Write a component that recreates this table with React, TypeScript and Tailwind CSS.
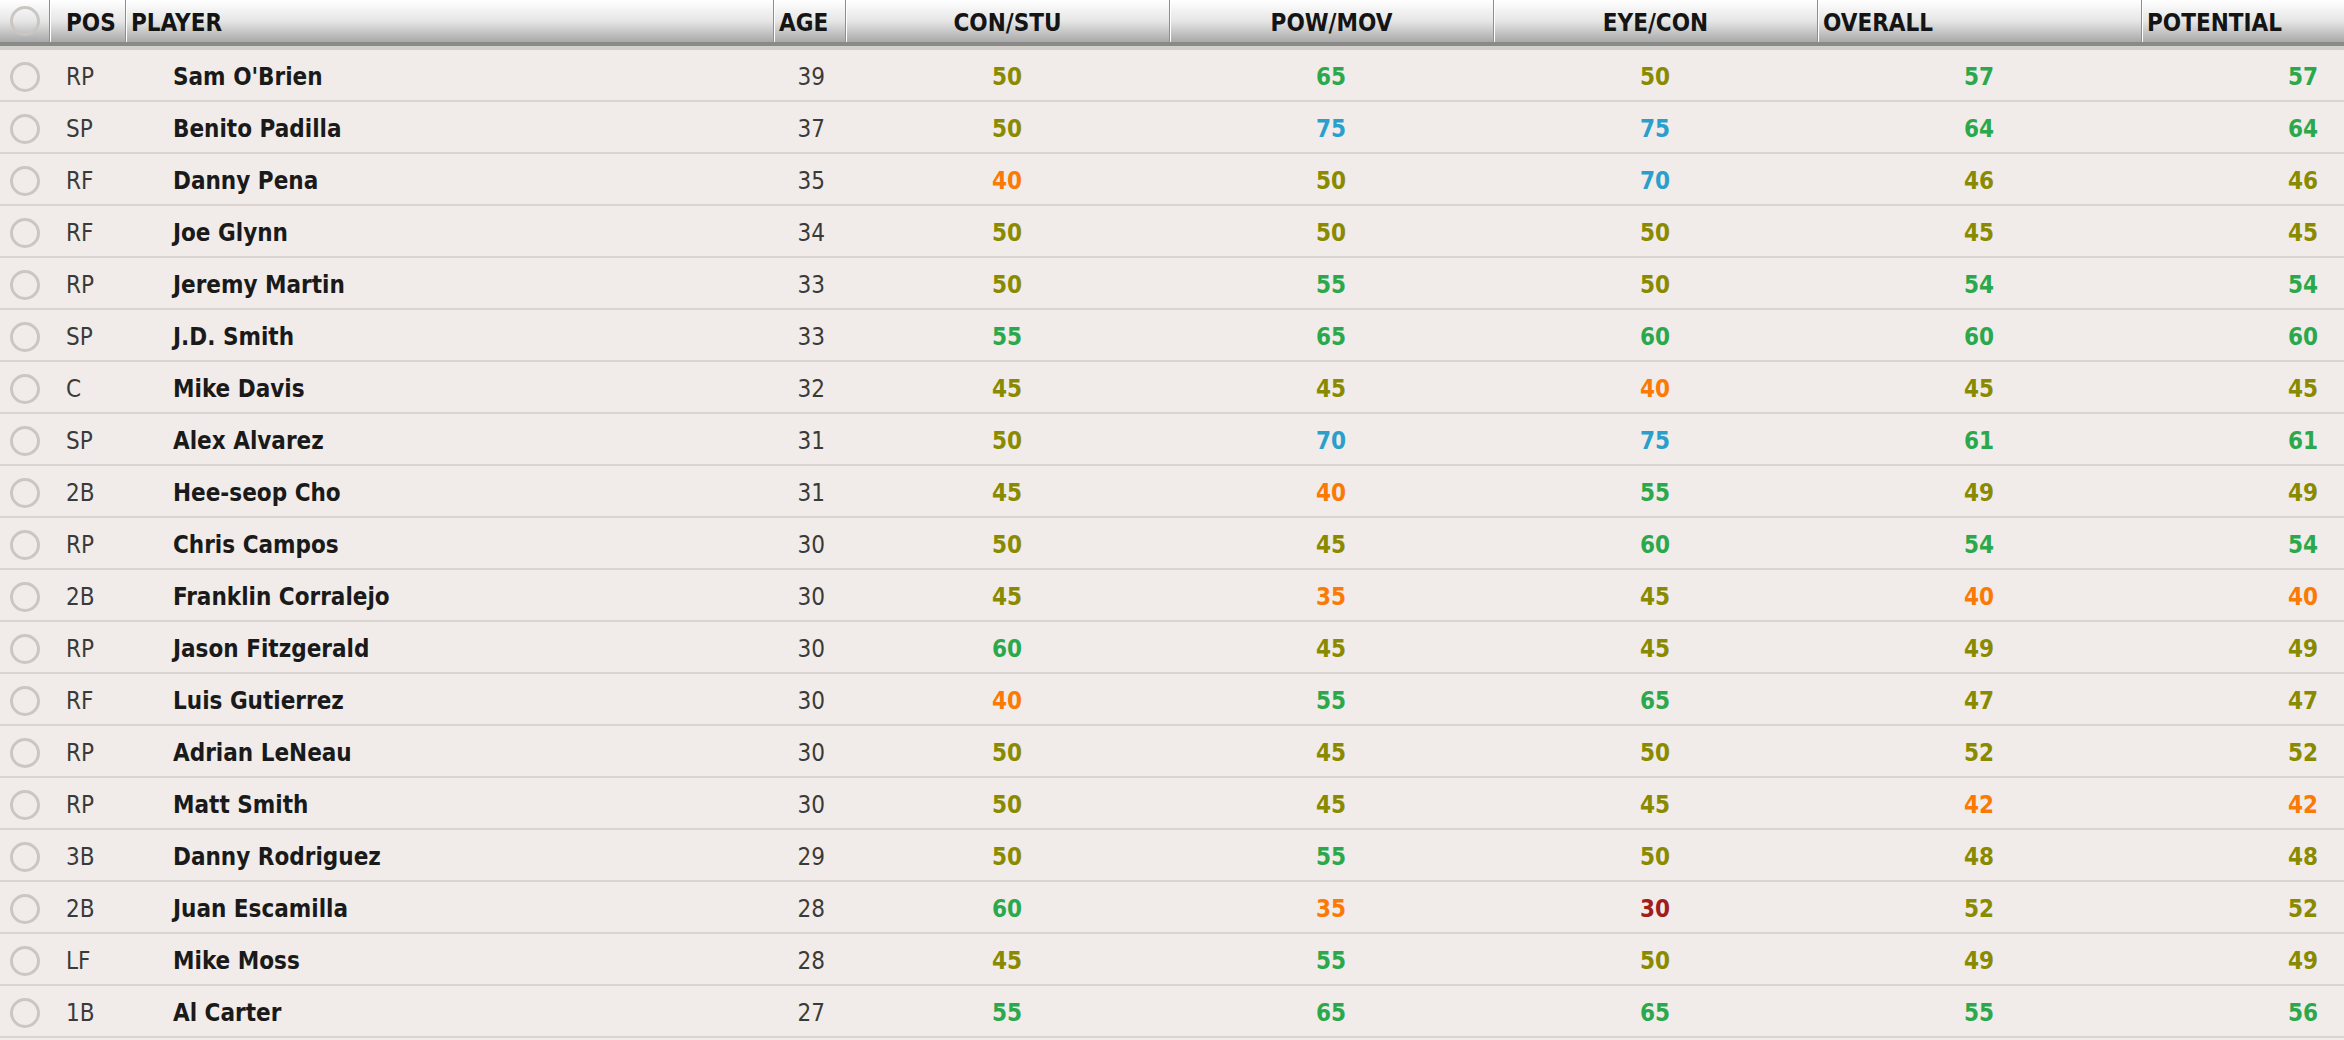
import React from 'react';

type Player = { pos: string; name: string; age: number; con: number; pow: number; eye: number; ovr: number; pot: number };

const players: Player[] = [
  { pos: 'RP', name: "Sam O'Brien", age: 39, con: 50, pow: 65, eye: 50, ovr: 57, pot: 57 },
  { pos: 'SP', name: 'Benito Padilla', age: 37, con: 50, pow: 75, eye: 75, ovr: 64, pot: 64 },
  { pos: 'RF', name: 'Danny Pena', age: 35, con: 40, pow: 50, eye: 70, ovr: 46, pot: 46 },
  { pos: 'RF', name: 'Joe Glynn', age: 34, con: 50, pow: 50, eye: 50, ovr: 45, pot: 45 },
  { pos: 'RP', name: 'Jeremy Martin', age: 33, con: 50, pow: 55, eye: 50, ovr: 54, pot: 54 },
  { pos: 'SP', name: 'J.D. Smith', age: 33, con: 55, pow: 65, eye: 60, ovr: 60, pot: 60 },
  { pos: 'C', name: 'Mike Davis', age: 32, con: 45, pow: 45, eye: 40, ovr: 45, pot: 45 },
  { pos: 'SP', name: 'Alex Alvarez', age: 31, con: 50, pow: 70, eye: 75, ovr: 61, pot: 61 },
  { pos: '2B', name: 'Hee-seop Cho', age: 31, con: 45, pow: 40, eye: 55, ovr: 49, pot: 49 },
  { pos: 'RP', name: 'Chris Campos', age: 30, con: 50, pow: 45, eye: 60, ovr: 54, pot: 54 },
  { pos: '2B', name: 'Franklin Corralejo', age: 30, con: 45, pow: 35, eye: 45, ovr: 40, pot: 40 },
  { pos: 'RP', name: 'Jason Fitzgerald', age: 30, con: 60, pow: 45, eye: 45, ovr: 49, pot: 49 },
  { pos: 'RF', name: 'Luis Gutierrez', age: 30, con: 40, pow: 55, eye: 65, ovr: 47, pot: 47 },
  { pos: 'RP', name: 'Adrian LeNeau', age: 30, con: 50, pow: 45, eye: 50, ovr: 52, pot: 52 },
  { pos: 'RP', name: 'Matt Smith', age: 30, con: 50, pow: 45, eye: 45, ovr: 42, pot: 42 },
  { pos: '3B', name: 'Danny Rodriguez', age: 29, con: 50, pow: 55, eye: 50, ovr: 48, pot: 48 },
  { pos: '2B', name: 'Juan Escamilla', age: 28, con: 60, pow: 35, eye: 30, ovr: 52, pot: 52 },
  { pos: 'LF', name: 'Mike Moss', age: 28, con: 45, pow: 55, eye: 50, ovr: 49, pot: 49 },
  { pos: '1B', name: 'Al Carter', age: 27, con: 55, pow: 65, eye: 65, ovr: 55, pot: 56 },
];

// rating -> colour band
const rateColor = (v: number) => {
  if (v >= 70) return 'text-[#2a9fcc]';
  if (v >= 53) return 'text-[#2ba84c]';
  if (v >= 45) return 'text-[#8a8a00]';
  if (v >= 31) return 'text-[#fb7a05]';
  return 'text-[#a11d1d]';
};

const cols = 'grid grid-cols-[49px_76px_648px_72px_324px_324px_324px_324px_324px]';

function Radio() {
  return <div className="w-[30px] h-[30px] rounded-full border-[3px] border-[#c9c6c3]" />;
}

function HeadCell({ label, align = 'left' }: { label: string; align?: 'left' | 'center' }) {
  return (
    <div className={`flex items-center h-full pt-[4px] border-l border-[#8e8e8e] shadow-[inset_1px_0_0_#ffffff] ${align === 'center' ? 'justify-center' : 'pl-[5px]'}`}>
      {label}
    </div>
  );
}

export default function App() {
  return (
    <div className="w-[2344px] h-[1040px] overflow-hidden bg-[#f1ece9] font-['DejaVu_Sans_Condensed','Liberation_Sans_Narrow','Liberation_Sans',sans-serif]">
      <div className="w-[2465px]">
        <div className="h-[50px] border-b-[4px] border-[#d3cfcb]">
          <div className={`${cols} h-[46px] bg-gradient-to-b from-[#ffffff] via-[#e6e6e6] to-[#a9a9a9] border-b-[4px] border-[#8a8a8a] text-[24px] font-semibold text-[#141414]`}>
            <div className="flex items-center justify-center h-full"><Radio /></div>
            <div className="flex items-center h-full pt-[4px] border-l border-[#8e8e8e] shadow-[inset_1px_0_0_#ffffff] pl-[16px]">POS</div>
            <HeadCell label="PLAYER" />
            <HeadCell label="AGE" />
            <HeadCell label="CON/STU" align="center" />
            <HeadCell label="POW/MOV" align="center" />
            <HeadCell label="EYE/CON" align="center" />
            <HeadCell label="OVERALL" />
            <HeadCell label="POTENTIAL" />
          </div>
        </div>
        {players.map((p) => (
          <div key={p.name} className={`${cols} h-[52px] pt-[4px] border-b-2 border-[#d9d4d0] items-center text-[24px]`}>
            <div className="flex justify-center"><Radio /></div>
            <div className="pl-[17px] text-[#3a3a3a]">{p.pos}</div>
            <div className="pl-[48px] font-semibold text-[#1a1a1a]">{p.name}</div>
            <div className="text-right pr-[20px] text-[#3a3a3a]">{p.age}</div>
            <div className={`text-center font-bold ${rateColor(p.con)}`}>{p.con}</div>
            <div className={`text-center font-bold ${rateColor(p.pow)}`}>{p.pow}</div>
            <div className={`text-center font-bold ${rateColor(p.eye)}`}>{p.eye}</div>
            <div className={`text-center font-bold ${rateColor(p.ovr)}`}>{p.ovr}</div>
            <div className={`text-center font-bold ${rateColor(p.pot)}`}>{p.pot}</div>
          </div>
        ))}
      </div>
    </div>
  );
}
